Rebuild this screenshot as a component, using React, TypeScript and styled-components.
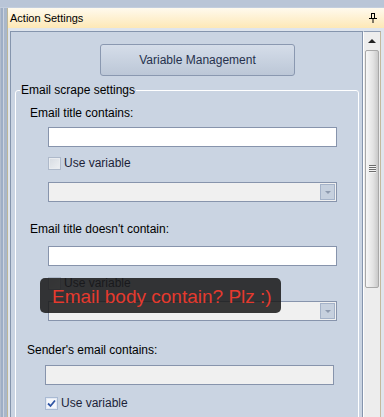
import React from "react";
import styled, { createGlobalStyle } from "styled-components";

const GlobalStyle = createGlobalStyle`
  html, body {
    margin: 0;
    padding: 0;
    background: #b8c4d6;
  }
  body {
    font-family: "Liberation Sans", Arial, sans-serif;
  }
`;

const Window = styled.div`
  width: 384px;
  height: 417px;
  overflow: hidden;
  display: grid;
  grid-template-rows: 8px 1fr;
  background: #b9c5d7;
`;

const TopBar = styled.div`
  background: #b9c5d7;
  border-bottom: 1px solid #c3cede;
`;

const Row = styled.div`
  display: flex;
  min-height: 0;
`;

const LeftStrip = styled.div`
  width: 8px;
  flex: none;
  background: linear-gradient(
    to right,
    #b2bdcd 0px,
    #b2bdcd 1px,
    #9eaec5 1px,
    #9eaec5 3px,
    #cbd3df 3px,
    #cbd3df 4px,
    #a9b7ca 4px,
    #a9b7ca 7px,
    #bdb799 7px,
    #bdb799 8px
  );
`;

const Pane = styled.div`
  flex: 1;
  display: flex;
  flex-direction: column;
  min-width: 0;
`;

const Header = styled.div`
  height: 20px;
  flex: none;
  display: flex;
  align-items: center;
  justify-content: space-between;
  padding: 0 7px 0 2px;
  background: linear-gradient(to bottom, #fffaee, #fde8b6);
  font-size: 11px;
  color: #000;
`;

const Body = styled.div`
  flex: 1;
  min-height: 0;
  display: flex;
  padding: 3px 3px 0 2px;
  background: #dfe5ed;
`;

const Content = styled.div`
  position: relative;
  flex: 1;
  min-width: 0;
  background: #cad4e2;
  border: 1px solid #8595ad;
  border-bottom: none;
  display: flex;
  flex-direction: column;
  align-items: flex-start;
  overflow: hidden;
`;

const ManageButton = styled.div`
  flex: none;
  margin: 12px 0 0 89px;
  width: 193px;
  height: 30px;
  border: 1px solid #8a98b0;
  border-radius: 3px;
  background: linear-gradient(to bottom, #d5dde9, #bcc7d7);
  display: flex;
  align-items: center;
  justify-content: center;
  font-size: 12px;
  color: #26314d;
`;

const Group = styled.fieldset`
  flex: none;
  margin: 7px 0 0 4px;
  width: 344px;
  box-sizing: border-box;
  min-width: 0;
  padding: 0 0 20px 0;
  border: 1px solid #ffffff;
  border-radius: 3px;
  display: flex;
  flex-direction: column;
  align-items: flex-start;
`;

const GroupTitle = styled.legend`
  margin-left: 4px;
  padding: 0 1px;
  font-size: 12px;
  line-height: 14px;
  color: #000;
`;

const Section = styled.div<{ $top: number; $indent: number }>`
  flex: none;
  margin: ${(p) => p.$top}px 0 0 ${(p) => p.$indent}px;
  display: flex;
  flex-direction: column;
  align-items: flex-start;
`;

const FieldLabel = styled.div`
  flex: none;
  margin-left: -18px;
  font-size: 12px;
  line-height: 14px;
  color: #000;
`;

const TextBox = styled.div<{ $gap: number; $disabled?: boolean }>`
  flex: none;
  margin-top: ${(p) => p.$gap}px;
  width: 289px;
  height: 20px;
  box-sizing: border-box;
  border: 1px solid #8794ac;
  background: ${(p) => (p.$disabled ? "#f0f0f0" : "#ffffff")};
`;

const CheckRow = styled.div<{ $gap: number }>`
  flex: none;
  margin-top: ${(p) => p.$gap}px;
  display: flex;
  align-items: center;
  gap: 3px;
  height: 13px;
  font-size: 12px;
  line-height: 13px;
  color: #1c1f38;
`;

const Box = styled.span<{ $checked?: boolean }>`
  width: 13px;
  height: 13px;
  box-sizing: border-box;
  display: flex;
  align-items: center;
  justify-content: center;
  border: 1px solid ${(p) => (p.$checked ? "#a9bad3" : "#aeb9ca")};
  background: ${(p) =>
    p.$checked ? "#f5f7fb" : "linear-gradient(135deg, #d6dbe2, #eef0f3)"};
  box-shadow: inset 0 0 0 1px ${(p) => (p.$checked ? "#e4eaf4" : "#e9ecf0")};
`;

const Combo = styled.div<{ $gap: number }>`
  flex: none;
  margin-top: ${(p) => p.$gap}px;
  width: 289px;
  height: 20px;
  box-sizing: border-box;
  border: 1px solid #8794ac;
  background: #f0f0f0;
  display: flex;
  justify-content: flex-end;
  padding: 1px;
`;

const ComboArrow = styled.span`
  width: 15px;
  height: 16px;
  box-sizing: border-box;
  border: 1px solid #a4b2c8;
  background: #c6d0de;
  display: flex;
  align-items: center;
  justify-content: center;

  &::after {
    content: "";
    width: 0;
    height: 0;
    border-left: 3px solid transparent;
    border-right: 3px solid transparent;
    border-top: 3px solid #8e9aae;
  }
`;

const Scrollbar = styled.div`
  width: 18px;
  flex: none;
  box-sizing: border-box;
  background: #ededed;
  border-top: 1px solid #8f9db3;
  border-left: 1px solid #ffffff;
  border-right: 1px solid #c4b99d;
  display: flex;
  flex-direction: column;
  align-items: center;
`;

const ScrollUp = styled.div`
  height: 18px;
  flex: none;
  display: flex;
  align-items: center;
  justify-content: center;

  &::after {
    content: "";
    border-left: 4px solid transparent;
    border-right: 4px solid transparent;
    border-bottom: 4px solid #222;
  }
`;

const Thumb = styled.div`
  flex: none;
  width: 14px;
  height: 238px;
  box-sizing: border-box;
  border: 1px solid #a8a8a8;
  border-radius: 2px;
  background: linear-gradient(to right, #f7f7f7, #e2e2e2 60%, #c9c9c9);
  display: flex;
  align-items: center;
  justify-content: center;
`;

const Grip = styled.div`
  width: 7px;
  height: 8px;
  background: repeating-linear-gradient(
    to bottom,
    #6d6d6d 0px,
    #6d6d6d 1px,
    #f4f4f4 1px,
    #f4f4f4 2px
  );
`;

const Tooltip = styled.div`
  position: absolute;
  left: 29px;
  top: 246px;
  width: 241px;
  height: 35px;
  box-sizing: border-box;
  padding: 2px 0 0 12px;
  border-radius: 5px;
  background: rgba(24, 24, 24, 0.86);
  color: #e53a2e;
  font-size: 19px;
  line-height: 33px;
  white-space: nowrap;
`;

const PinIcon = () => (
  <svg width="8" height="10" viewBox="0 0 8 10">
    <path d="M2 0.5h4M2.5 0.5v5M5.5 0.5v5M0 5.5h8M4 5.5v4.5" stroke="#000" strokeWidth="1" fill="none" />
    <rect x="5" y="1" width="1" height="4" fill="#000" />
  </svg>
);

const CheckMark = () => (
  <svg width="9" height="9" viewBox="0 0 9 9">
    <path d="M1 4.5l2.5 2.5L8 1.5" stroke="#2f55a4" strokeWidth="1.8" fill="none" />
  </svg>
);

type FieldProps = {
  label: string;
  top: number;
  indent: number;
  inputGap: number;
  checkGap: number;
  comboGap?: number;
  checked?: boolean;
};

const Field = ({ label, top, indent, inputGap, checkGap, comboGap, checked }: FieldProps) => (
  <Section $top={top} $indent={indent}>
    <FieldLabel>{label}</FieldLabel>
    <TextBox $gap={inputGap} $disabled={checked} />
    <CheckRow $gap={checkGap}>
      <Box $checked={checked}>{checked && <CheckMark />}</Box>
      Use variable
    </CheckRow>
    {comboGap !== undefined && (
      <Combo $gap={comboGap}>
        <ComboArrow />
      </Combo>
    )}
  </Section>
);

export default function App() {
  return (
    <>
      <GlobalStyle />
      <Window>
        <TopBar />
        <Row>
          <LeftStrip />
          <Pane>
            <Header>
              <span>Action Settings</span>
              <PinIcon />
            </Header>
            <Body>
              <Content>
                <ManageButton>Variable Management</ManageButton>
                <Group>
                  <GroupTitle>Email scrape settings</GroupTitle>
                  <Field label="Email title contains:" top={9} indent={32} inputGap={7} checkGap={10} comboGap={12} />
                  <Field label="Email title doesn't contain:" top={20} indent={32} inputGap={10} checkGap={11} comboGap={11} />
                  <Field label="Sender's email contains:" top={22} indent={29} inputGap={8} checkGap={12} checked />
                </Group>
                <Tooltip>Email body contain? Plz :)</Tooltip>
              </Content>
              <Scrollbar>
                <ScrollUp />
                <Thumb>
                  <Grip />
                </Thumb>
              </Scrollbar>
            </Body>
          </Pane>
        </Row>
      </Window>
    </>
  );
}
